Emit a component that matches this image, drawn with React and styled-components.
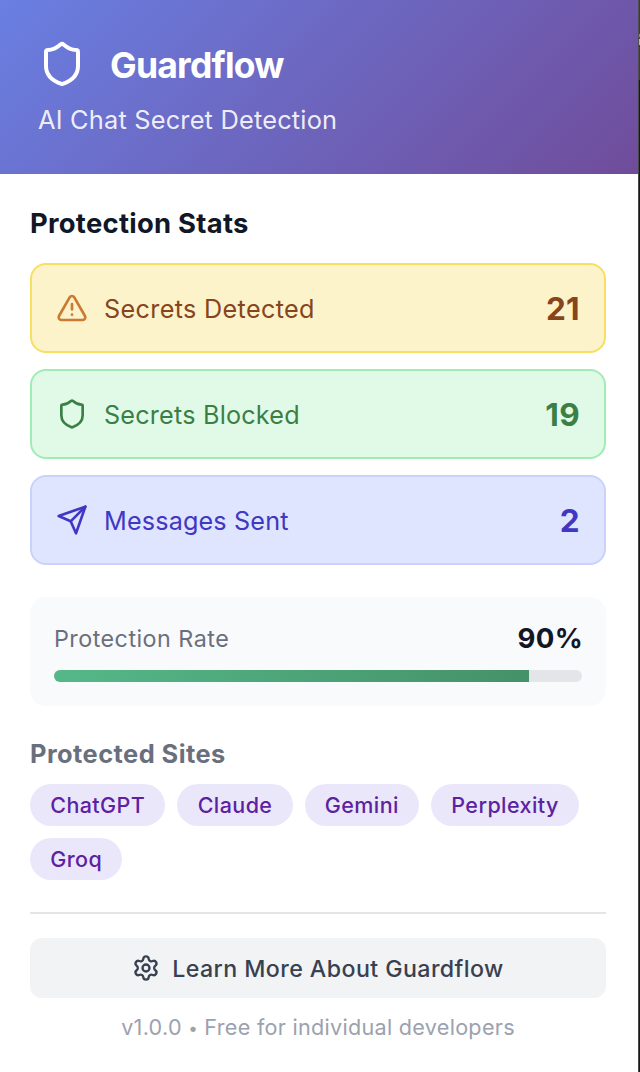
import React from "react";
import styled, { createGlobalStyle } from "styled-components";

const GlobalStyle = createGlobalStyle`
  *, *::before, *::after { box-sizing: border-box; }
  body {
    margin: 0;
    background: #fff;
    font-family: Inter, "Liberation Sans", sans-serif;
    -webkit-font-smoothing: antialiased;
  }
  h1, h2, h3, p, ul { margin: 0; padding: 0; }
`;

const Window = styled.div`
  display: grid;
  grid-template-columns: 638px 1px 1px;
  width: 640px;
  height: 1072px;
  overflow: hidden;
`;

const Popup = styled.div`
  display: flex;
  flex-direction: column;
  background: #fff;
`;

const WindowBorder = styled.div`
  background: linear-gradient(#505050 0 80px, #474849 80px);
`;

const Backdrop = styled.div`
  background: linear-gradient(
    #3a3b3c 0 34px,
    #8a8a8a 34px 37px,
    #444 37px 39px,
    #b4b4b4 39px 45px,
    #3a3b3c 45px 80px,
    #161819 80px
  );
`;

const Header = styled.header`
  height: 174px;
  padding: 40px 38px 0;
  color: #fff;
  background: linear-gradient(135deg, #697fe2 0%, #704c9a 100%);
`;

const Brand = styled.div`
  display: flex;
  align-items: center;
  gap: 24px;
`;

const Title = styled.h1`
  padding-top: 3px;
  font-size: 35.5px;
  line-height: 45px;
  font-weight: 700;
  letter-spacing: -0.75px;
`;

const Tagline = styled.p`
  margin-top: 16px;
  font-size: 25.4px;
  line-height: 32px;
  font-weight: 430;
  letter-spacing: 0.18px;
  color: rgba(255, 255, 255, 0.9);
`;

const Content = styled.main`
  display: flex;
  flex-direction: column;
  padding: 32px 32px 0 30px;
`;

const Heading = styled.h2`
  font-size: 27.4px;
  line-height: 34px;
  font-weight: 650;
  letter-spacing: 0.28px;
  color: #111726;
`;

const Stats = styled.div`
  display: flex;
  flex-direction: column;
  gap: 16px;
  margin-top: 23px;
`;

const tones = {
  warning: { bg: "#fcf3cb", border: "#f6df61", text: "#87451d", icon: "#cb7a32" },
  success: { bg: "#e1fae8", border: "#9fecb4", text: "#3b7f45", icon: "#3b7f45" },
  info: { bg: "#e0e5ff", border: "#c8d2fa", text: "#4037c2", icon: "#4037c2" },
};

const StatCard = styled.div`
  display: flex;
  align-items: center;
  gap: 16px;
  height: 90px;
  padding: 0 24px;
  border: 2px solid ${(p) => tones[p.$tone].border};
  border-radius: 16px;
  background: ${(p) => tones[p.$tone].bg};
  color: ${(p) => tones[p.$tone].text};

  svg { color: ${(p) => tones[p.$tone].icon}; }
`;

const StatLabel = styled.span`
  flex: 1;
  font-size: 25.2px;
  line-height: 32px;
  padding-top: 1px;
  font-weight: 440;
  letter-spacing: ${(p) => p.$tracking}px;
`;

const StatValue = styled.span`
  padding-top: 2px;
  font-size: 31.5px;
  line-height: 40px;
  font-weight: 700;
  letter-spacing: 0.3px;
`;

const RateCard = styled.section`
  margin-top: 32px;
  padding: 24px;
  border-radius: 16px;
  background: #f9fafc;
`;

const RateRow = styled.div`
  display: flex;
  align-items: center;
  justify-content: space-between;
  height: 34px;
`;

const RateLabel = styled.span`
  padding-top: 2px;
  font-size: 23.3px;
  line-height: 34px;
  font-weight: 430;
  letter-spacing: 0.48px;
  color: #6a6f7e;
`;

const RateValue = styled.span`
  font-size: 27.6px;
  line-height: 34px;
  font-weight: 650;
  letter-spacing: 0.3px;
  margin-right: -1px;
  color: #111726;
`;

const Track = styled.div`
  height: 12px;
  margin-top: 15px;
  border-radius: 6px;
  overflow: hidden;
  background: #e4e5e9;
`;

const Fill = styled.div`
  height: 100%;
  background: linear-gradient(90deg, #55b888, #459168);
`;

const SitesHeading = styled.h3`
  margin-top: 32px;
  font-size: 25.4px;
  line-height: 32px;
  font-weight: 650;
  letter-spacing: 0.45px;
  color: #6a6f7e;
`;

const Chips = styled.ul`
  display: flex;
  flex-wrap: wrap;
  gap: 12px;
  margin-top: 14px;
  list-style: none;
`;

const Chip = styled.li`
  height: 42px;
  padding: 0 20.2px;
  border-radius: 21px;
  background: #ebe7fb;
  color: #5d22a1;
  font-size: 21.5px;
  line-height: 42px;
  font-weight: 530;
  letter-spacing: 0.42px;
`;

const Footer = styled.footer`
  display: flex;
  flex-direction: column;
  margin-top: 32px;
  padding-top: 24px;
  border-top: 2px solid #e4e5e9;
`;

const LearnButton = styled.button`
  display: flex;
  align-items: center;
  justify-content: center;
  gap: 12px;
  height: 60px;
  padding: 0;
  border: 0;
  border-radius: 12px;
  background: #f2f3f5;
  color: #384150;
  font-family: inherit;
  font-size: 23.2px;
  line-height: 30px;
  font-weight: 530;
  letter-spacing: 0.42px;
`;

const ButtonText = styled.span`
  padding-top: 1px;
`;

const Version = styled.p`
  margin-top: 16px;
  font-size: 21.6px;
  line-height: 26px;
  letter-spacing: 0.28px;
  text-align: center;
  color: #9ca1ae;
`;

const Bullet = styled.span`
  font-size: 17px;
  line-height: 1;
  vertical-align: 1.5px;
`;

const Icon = styled.svg.attrs({
  viewBox: "0 0 24 24",
  fill: "none",
  stroke: "currentColor",
  strokeWidth: 2,
  strokeLinecap: "round",
  strokeLinejoin: "round",
  "aria-hidden": true,
})`
  flex: none;
  width: ${(p) => p.$size}px;
  height: ${(p) => p.$size}px;
`;

const ShieldIcon = ({ size }) => (
  <Icon $size={size}>
    <path d="M20 13c0 5-3.5 7.5-7.66 8.95a1 1 0 0 1-.67-.01C7.5 20.5 4 18 4 13V6a1 1 0 0 1 1-1c2 0 4.5-1.2 6.24-2.72a1.17 1.17 0 0 1 1.52 0C14.51 3.81 17 5 19 5a1 1 0 0 1 1 1z" />
  </Icon>
);

const AlertIcon = ({ size }) => (
  <Icon $size={size}>
    <path d="m21.73 18-8-14a2 2 0 0 0-3.48 0l-8 14A2 2 0 0 0 4 21h16a2 2 0 0 0 1.73-3" />
    <path d="M12 9v4" />
    <path d="M12 17h.01" />
  </Icon>
);

const SendIcon = ({ size }) => (
  <Icon $size={size}>
    <path d="m22 2-7 20-4-9-9-4Z" />
    <path d="M22 2 11 13" />
  </Icon>
);

const GearIcon = ({ size }) => (
  <Icon $size={size}>
    <path d="M9.671 4.136a2.34 2.34 0 0 1 4.659 0 2.34 2.34 0 0 0 3.319 1.915 2.34 2.34 0 0 1 2.33 4.033 2.34 2.34 0 0 0 0 3.831 2.34 2.34 0 0 1-2.33 4.033 2.34 2.34 0 0 0-3.319 1.915 2.34 2.34 0 0 1-4.659 0 2.34 2.34 0 0 0-3.32-1.915 2.34 2.34 0 0 1-2.33-4.033 2.34 2.34 0 0 0 0-3.831A2.34 2.34 0 0 1 6.35 6.051a2.34 2.34 0 0 0 3.319-1.915" />
    <circle cx="12" cy="12" r="3" />
  </Icon>
);

const stats = [
  { label: "Secrets Detected", value: 21, tone: "warning", icon: AlertIcon, tracking: 0.34 },
  { label: "Secrets Blocked", value: 19, tone: "success", icon: ShieldIcon, tracking: 0.2 },
  { label: "Messages Sent", value: 2, tone: "info", icon: SendIcon, tracking: 0.15 },
];

const sites = ["ChatGPT", "Claude", "Gemini", "Perplexity", "Groq"];
const rate = 90;

export default function App() {
  return (
    <>
      <GlobalStyle />
      <Window>
        <Popup>
          <Header>
            <Brand>
              <ShieldIcon size={48} />
              <Title>Guardflow</Title>
            </Brand>
            <Tagline>AI Chat Secret Detection</Tagline>
          </Header>
          <Content>
            <Heading>Protection Stats</Heading>
            <Stats>
              {stats.map(({ label, value, tone, icon: StatIcon, tracking }) => (
                <StatCard key={label} $tone={tone}>
                  <StatIcon size={32} />
                  <StatLabel $tracking={tracking}>{label}</StatLabel>
                  <StatValue>{value}</StatValue>
                </StatCard>
              ))}
            </Stats>
            <RateCard>
              <RateRow>
                <RateLabel>Protection Rate</RateLabel>
                <RateValue>{rate}%</RateValue>
              </RateRow>
              <Track>
                <Fill style={{ width: `${rate}%` }} />
              </Track>
            </RateCard>
            <SitesHeading>Protected Sites</SitesHeading>
            <Chips>
              {sites.map((site) => (
                <Chip key={site}>{site}</Chip>
              ))}
            </Chips>
            <Footer>
              <LearnButton type="button">
                <GearIcon size={28} />
                <ButtonText>Learn More About Guardflow</ButtonText>
              </LearnButton>
              <Version>
                v1.0.0 <Bullet>•</Bullet> Free for individual developers
              </Version>
            </Footer>
          </Content>
        </Popup>
        <WindowBorder />
        <Backdrop />
      </Window>
    </>
  );
}
